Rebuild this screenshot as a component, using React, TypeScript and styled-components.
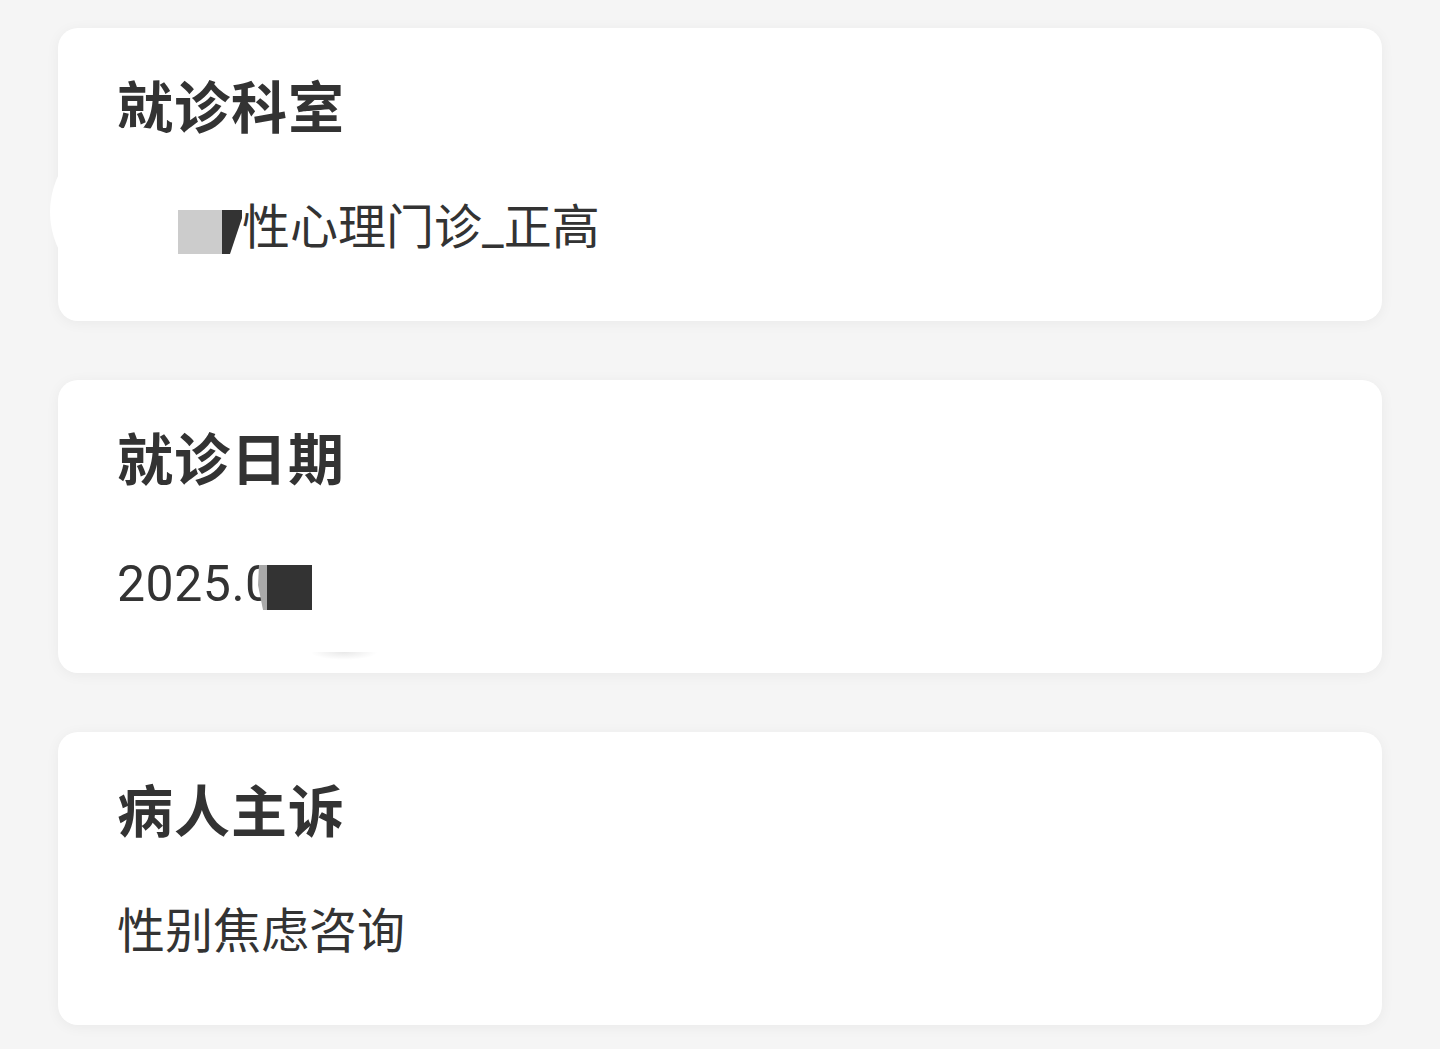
import React from "react";
import styled, { createGlobalStyle } from "styled-components";

const Global = createGlobalStyle`
  html, body { margin: 0; padding: 0; background: #f5f5f5; }
  body { font-family: "Noto Sans CJK SC", "Noto Sans", sans-serif; color: #333; }
`;

const Page = styled.div`
  width: 1440px;
  height: 1049px;
  box-sizing: border-box;
  padding: 28px 58px 0 58px;
  display: flex;
  flex-direction: column;
  gap: 59px;
  overflow: hidden;
  position: relative;
`;

const Card = styled.section`
  position: relative;
  height: 293px;
  box-sizing: border-box;
  padding: 36px 59px 0 59px;
  background: #fff;
  border-radius: 20px;
  box-shadow: 0 2px 14px rgba(0, 0, 0, 0.05);
`;

const Title = styled.h2`
  margin: 0;
  font-size: 56px;
  line-height: 80px;
  font-weight: 700;
  color: #333;
  letter-spacing: 1px;
`;

const Body = styled.div`
  position: relative;
  margin-top: 44px;
  font-family: Roboto, "Noto Sans CJK SC", sans-serif;
  font-size: 48px;
  line-height: 80px;
  font-weight: 400;
  color: #333;
  display: flex;
  align-items: center;
  z-index: 1;
`;

const Digits = styled.span`
  font-family: Roboto, sans-serif;
  font-size: 50px;
  letter-spacing: 0.5px;
  margin-top: 4px;
`;

const Indent = styled.span<{ $w: number }>`
  display: inline-block;
  width: ${(p) => p.$w}px;
`;

const GrayBlock = styled.span`
  display: inline-block;
  width: 44px;
  height: 44px;
  background: #cccccc;
  margin-top: 8px;
`;

const SlantBlock = styled.svg`
  display: block;
  margin-top: 8px;
`;

const DateRedact = styled.span`
  position: absolute;
  left: 141px;
  top: 25px;
  display: flex;
`;

const DarkSquare = styled.span`
  display: inline-block;
  width: 45px;
  height: 45px;
  background: #333;
`;

const Bubble = styled.div`
  position: absolute;
  left: -8px;
  top: 99px;
  width: 170px;
  height: 170px;
  border-radius: 50%;
  background: #fff;
  z-index: 0;
`;

const Crescent = styled.div`
  position: absolute;
  left: 252px;
  top: 272px;
  width: 68px;
  height: 8px;
  border-radius: 0 0 50% 50% / 0 0 100% 100%;
  background: radial-gradient(ellipse at 50% 0%, rgba(0,0,0,0.09), rgba(0,0,0,0) 70%);
`;

export default function App() {
  return (
    <>
      <Global />
      <Page>
        <Card>
          <Bubble />
          <Title>就诊科室</Title>
          <Body>
            <Indent $w={61} />
            <GrayBlock />
            <SlantBlock width="20" height="44" viewBox="0 0 20 44">
              <polygon points="0,0 20,0 20,8 8,44 0,44" fill="#333" />
            </SlantBlock>
            <span>性心理门诊_正高</span>
          </Body>
        </Card>
        <Card>
          <Title>就诊日期</Title>
          <Body>
            <Digits>2025.0</Digits>
            <DateRedact>
              <svg width="9" height="45" viewBox="0 0 9 45" style={{ display: "block" }}>
                <polygon points="1,0 9,0 9,45 5,45 0,20" fill="#a9a9a9" />
              </svg>
              <DarkSquare />
            </DateRedact>
          </Body>
          <Crescent />
        </Card>
        <Card>
          <Title>病人主诉</Title>
          <Body>
            <span>性别焦虑咨询</span>
          </Body>
        </Card>
      </Page>
    </>
  );
}
